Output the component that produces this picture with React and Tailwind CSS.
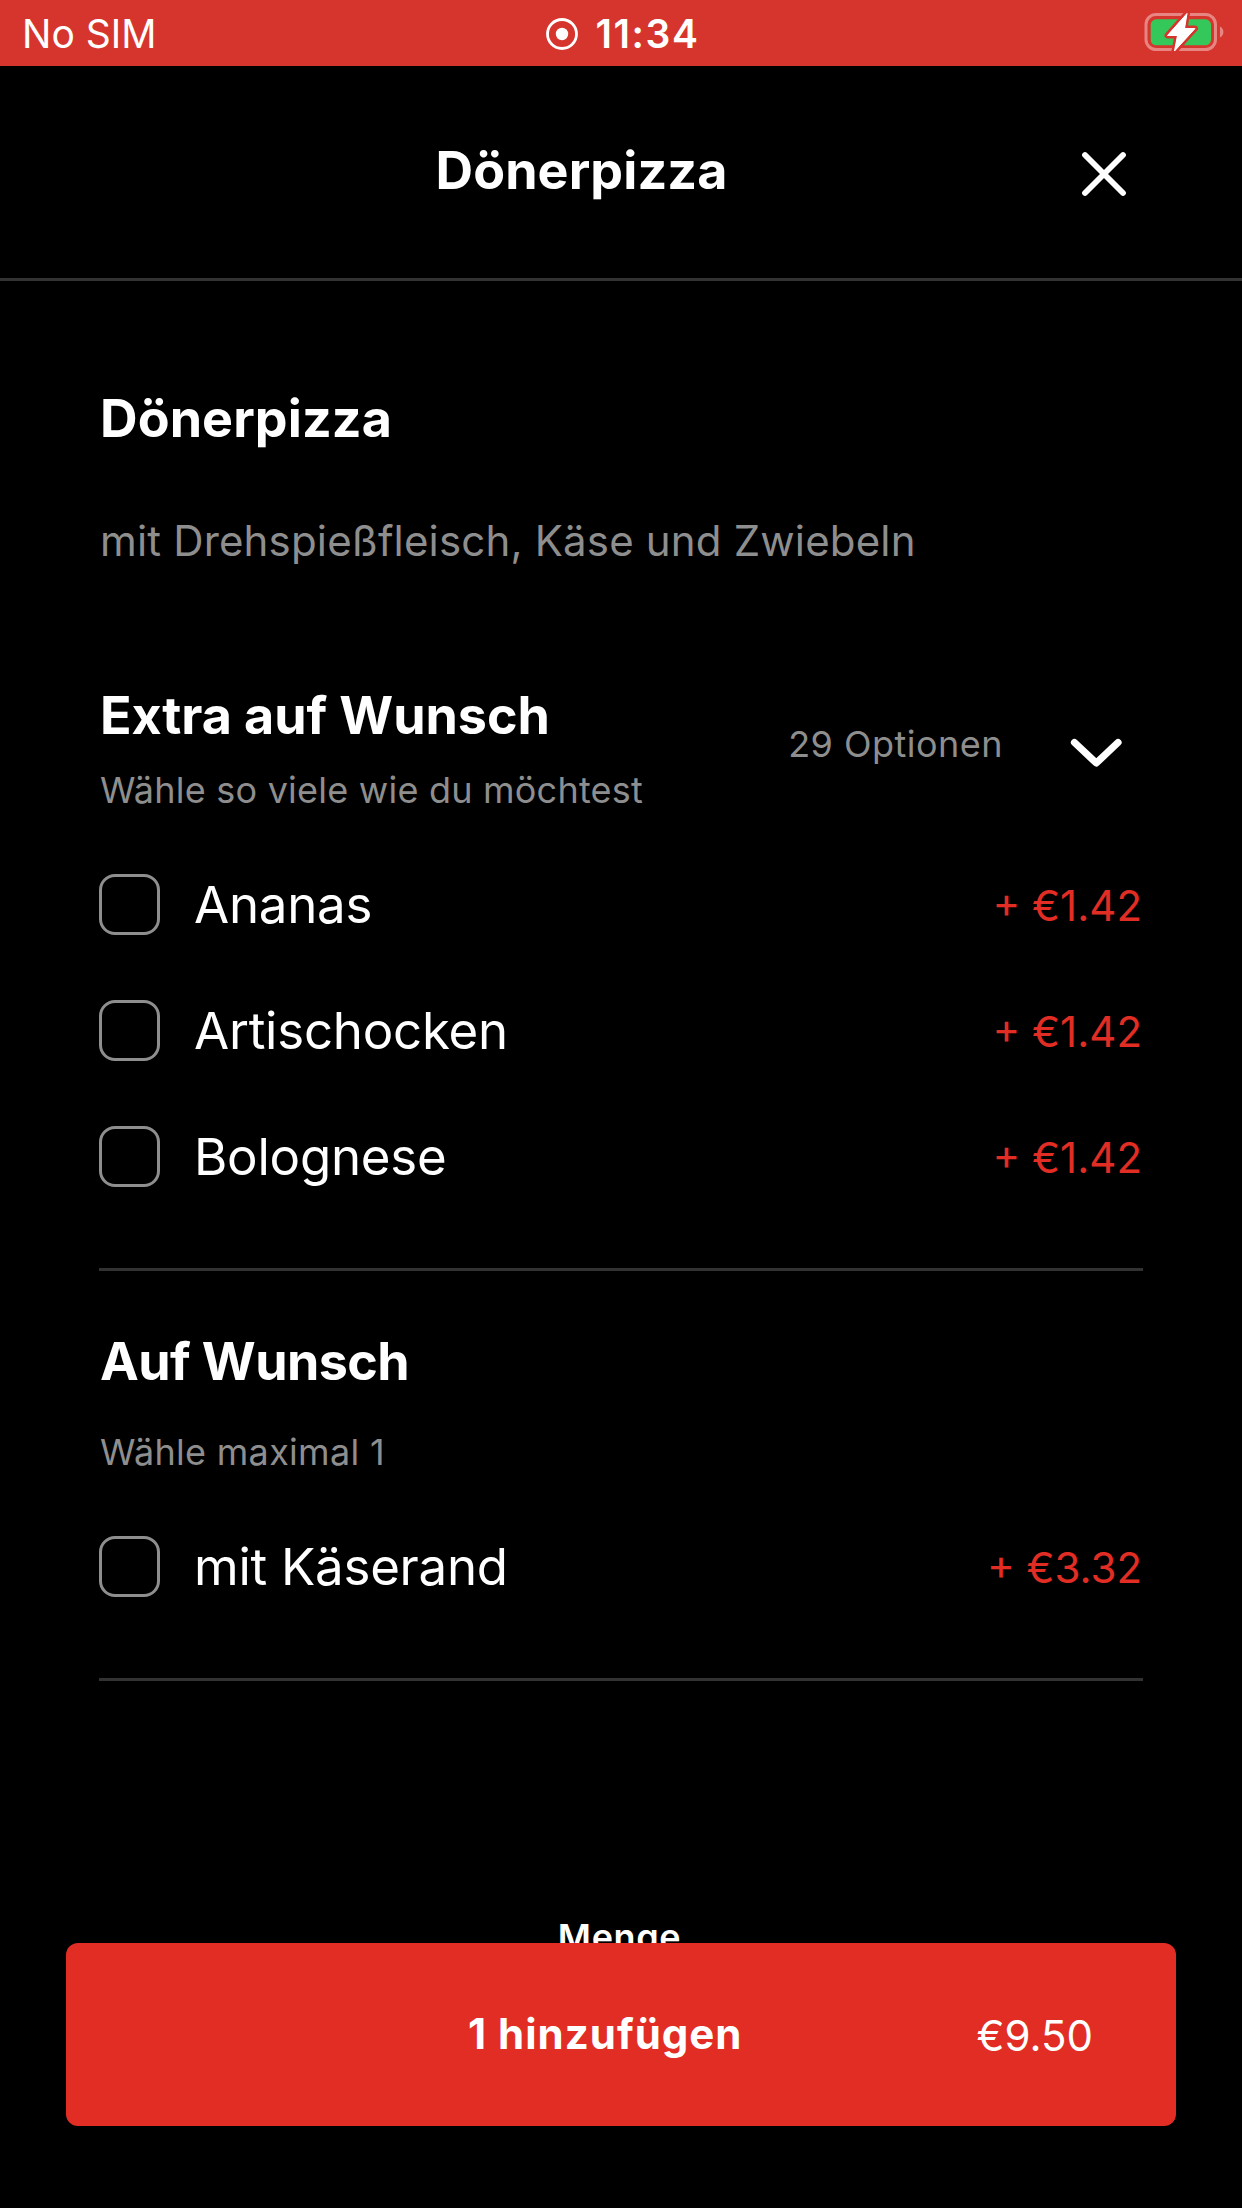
const extras = [
  { name: "Ananas", price: "+ €1.42" },
  { name: "Artischocken", price: "+ €1.42" },
  { name: "Bolognese", price: "+ €1.42" },
];

function StatusBar() {
  return (
    <div className="grid h-[66px] shrink-0 grid-cols-[1fr_auto_1fr] items-center bg-[#d6352d] pr-[18px] pl-[22px]">
      <span className="pt-[2px] text-[39px] leading-[48px]">No SIM</span>
      <div className="flex items-center gap-[17px] pt-[2px]">
        <svg width="32" height="32" viewBox="0 0 32 32" fill="none">
          <circle cx="16" cy="16" r="14.5" stroke="#fff" strokeWidth="2.8" />
          <circle cx="16" cy="16" r="6.2" fill="#fff" />
        </svg>
        <span className="text-[39px] leading-[48px] font-semibold tracking-[1.6px]">11:34</span>
      </div>
      <svg className="-mt-[2px] justify-self-end" width="80" height="42" viewBox="0 0 80 42" fill="none">
        <rect x="2" y="3.5" width="69.5" height="35" rx="10" stroke="#fff" strokeOpacity="0.4" strokeWidth="3" />
        <path d="M76 15.5c2.2 1 3.4 3 3.4 5.5s-1.2 4.5-3.4 5.500z" fill="#fff" fillOpacity="0.4" />
        <rect x="6.7" y="8.3" width="60.3" height="26" rx="5.5" fill="#34c759" />
        <path
          d="M43 2.500 L23.500 24.500 H33.500 L30.500 40 L51 17.500 H40.500 Z"
          fill="#fff"
          stroke="#d6352d"
          strokeWidth="6"
          strokeLinejoin="round"
          paintOrder="stroke"
        />
        <path d="M43 2.500 L23.500 24.500 H33.500 L30.500 40 L51 17.500 H40.500 Z" fill="#fff" stroke="#fff" strokeWidth="1" strokeLinejoin="round" />
      </svg>
    </div>
  );
}

function Header() {
  return (
    <header className="flex h-[215px] shrink-0 items-center border-b-[3px] border-[#323232] pr-[103px] pl-[94px]">
      <h1 className="flex-1 pb-[3px] text-center text-[52px] leading-[64px] font-bold tracking-[0.1px]">Dönerpizza</h1>
      <button aria-label="Schließen" className="flex w-[70px] items-center justify-center pt-[3px]">
        <svg width="46" height="46" viewBox="0 0 46 46" fill="none" stroke="#fff" strokeWidth="5.800" strokeLinecap="round">
          <path d="M4 4 42 42M42 4 4 42" />
        </svg>
      </button>
    </header>
  );
}

function Option({ name, price }) {
  return (
    <label className="flex h-[126px] items-center">
      <span className="mb-[2px] h-[61px] w-[61px] rounded-[16px] border-[3px] border-[#8e8e8e]" />
      <span className="ml-[34px] flex-1 text-[51px] leading-[64px] tracking-[-0.25px]">{name}</span>
      <span className="pt-[2px] pr-[1px] text-[42px] leading-[52px] text-[#e22d25]">{price}</span>
    </label>
  );
}

export default function App() {
  return (
    <div className="flex h-[2208px] w-[1242px] flex-col overflow-hidden bg-black font-['Inter','Liberation_Sans',sans-serif] text-white">
      <StatusBar />
      <Header />
      <main className="h-[1662px] shrink-0 px-[99px]">
        <h2 className="mt-[106px] pl-[1px] text-[52px] leading-[64px] font-bold tracking-[0.1px]">Dönerpizza</h2>
        <p className="mt-[64px] pl-[1px] text-[42px] leading-[52px] tracking-[0.17px] whitespace-nowrap text-[#8e8e8e]">
          mit Drehspießfleisch, Käse und Zwiebeln
        </p>

        <section className="mt-[117px]">
          <div className="flex items-center">
            <div className="flex-1 pl-[1px]">
              <h3 className="text-[52px] leading-[64px] font-bold tracking-[-0.07px]">Extra auf Wunsch</h3>
              <p className="mt-[20px] text-[36px] leading-[44px] tracking-[0.22px] text-[#8e8e8e]">Wähle so viele wie du möchtest</p>
            </div>
            <span className="pb-[8px] text-[36px] leading-[44px] tracking-[0.48px] text-[#8e8e8e]">29 Optionen</span>
            <svg className="mt-[9px] mr-[19px] ml-[65px]" width="56" height="34" viewBox="0 0 56 34" fill="none" stroke="#fff" strokeWidth="7.2" strokeLinecap="round" strokeLinejoin="round">
              <path d="M6.500 6.500 28.300 27 50 6.500" />
            </svg>
          </div>
          <div className="mt-[30px] border-b-[3px] border-[#323232] pb-[48px]">
            {extras.map((item) => (
              <Option key={item.name} {...item} />
            ))}
          </div>
        </section>

        <section className="mt-[59px]">
          <h3 className="pl-[1px] text-[52px] leading-[64px] font-bold tracking-[-0.6px]">Auf Wunsch</h3>
          <p className="mt-[36px] pl-[1px] text-[36px] leading-[44px] tracking-[0.3px] text-[#8e8e8e]">Wähle maximal 1</p>
          <div className="mt-[30px] border-b-[3px] border-[#323232] pb-[48px]">
            <Option name="mit Käserand" price="+ €3.32" />
          </div>
        </section>

        <p className="mt-[234px] pr-[3px] text-center text-[36px] leading-[44px] font-semibold tracking-[0.6px]">Menge</p>
      </main>

      <button className="z-10 mx-[66px] flex h-[183px] shrink-0 items-center rounded-[12px] bg-[#e22d25] pr-[83px] pl-[168px]">
        <span className="flex-1 pb-[2px] text-center text-[42px] leading-[52px] font-bold tracking-[1px]">1 hinzufügen</span>
        <span className="pt-[2px] text-[42px] leading-[52px]">€9.50</span>
      </button>
    </div>
  );
}
